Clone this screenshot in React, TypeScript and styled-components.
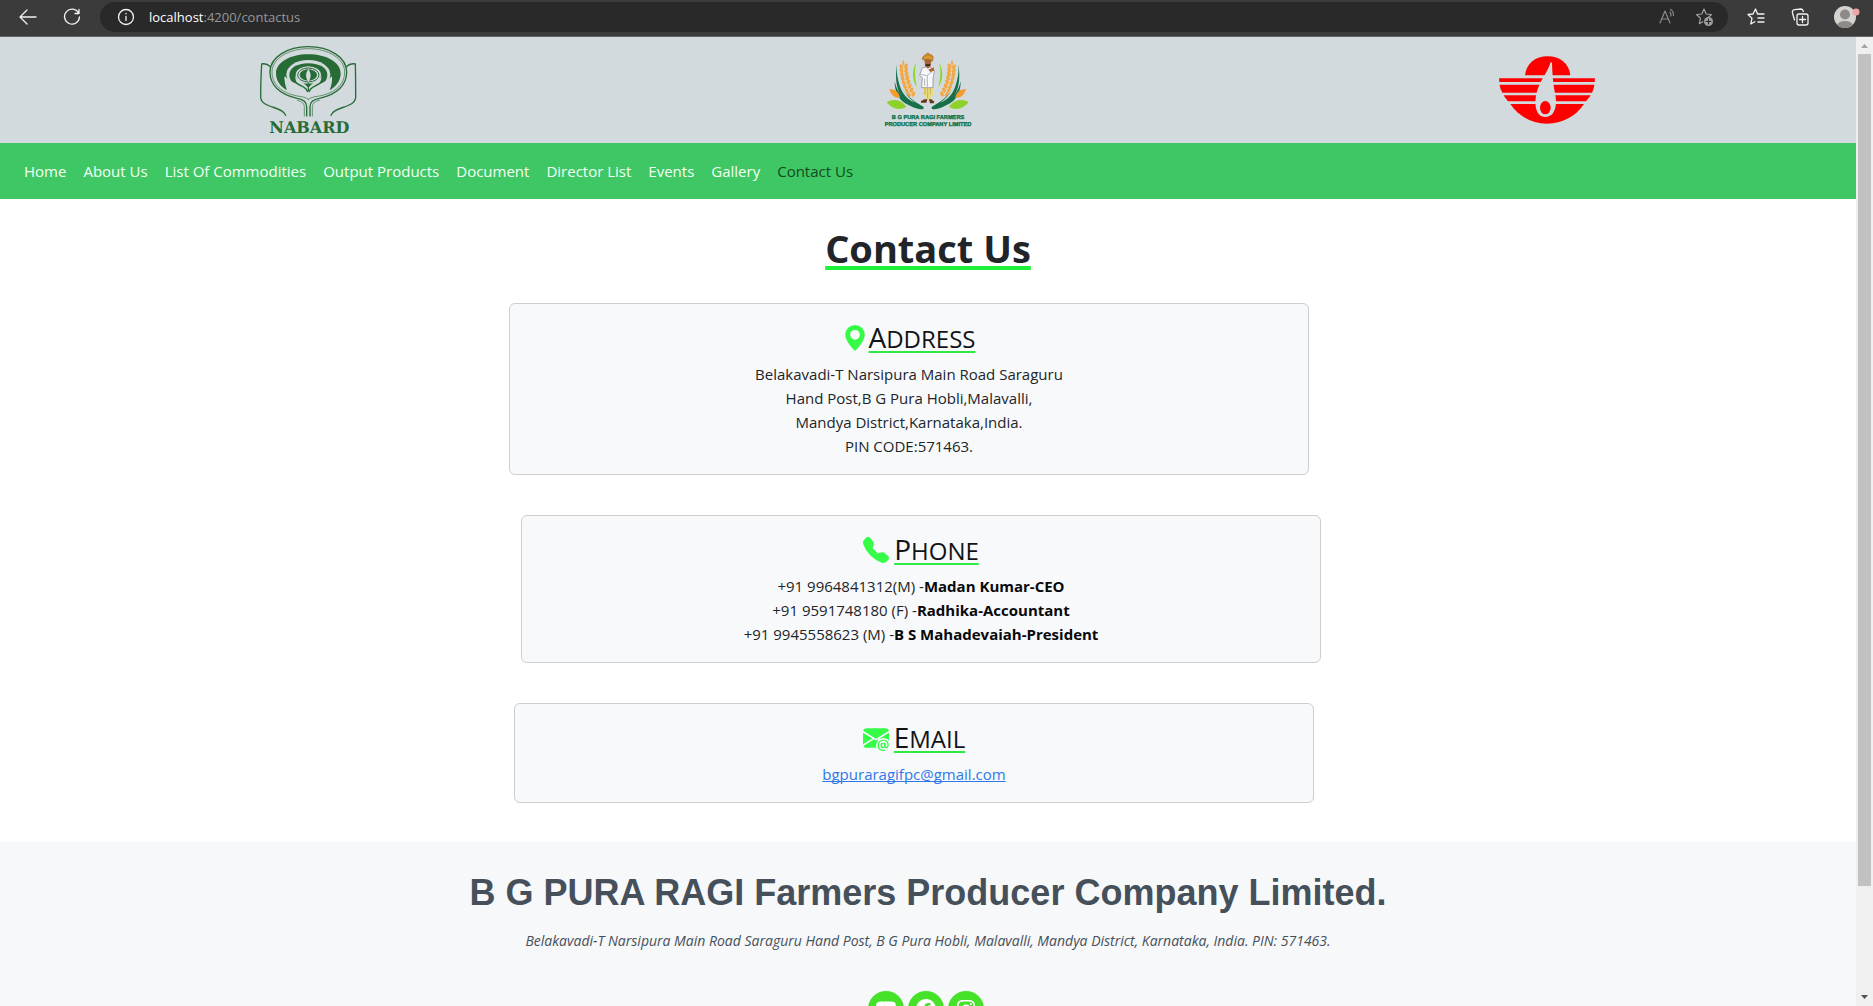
import React from "react";
import styled, { createGlobalStyle } from "styled-components";
import { BsEnvelopeAtFill, BsGeoAltFill, BsInstagram, BsTelephoneFill, BsYoutube, BsFacebook } from "react-icons/bs";

const GlobalStyle = createGlobalStyle`
  *, *::before, *::after { box-sizing: border-box; }
  body {
    margin: 0;
    overflow: hidden;
    background: #fff;
    color: #212529;
    font-family: "Open Sans", "Noto Sans", sans-serif;
    font-size: 15px;
    line-height: 24px;
  }
`;

const Window = styled.div`
  display: flex;
  flex-direction: column;
  height: 100vh;
`;

/* ---------- browser bar ---------- */

const BrowserBar = styled.div`
  flex: none;
  display: flex;
  align-items: center;
  height: 37px;
  padding: 0 13px 2px 16px;
  background: #3b3b3b;
  border-bottom: 1px solid #63676a;
`;

const IconButton = styled.button<{ $gap?: number; $color?: string }>`
  display: flex;
  flex: none;
  padding: 0;
  border: 0;
  background: none;
  color: ${(p) => p.$color ?? "#f2f2f2"};
  margin-left: ${(p) => p.$gap ?? 0}px;
`;

const AddressBar = styled.div`
  flex: 1;
  display: flex;
  align-items: center;
  height: 30px;
  margin-left: 16px;
  padding: 0 12px 0 14px;
  border-radius: 15px;
  background: #292929;
`;

const Url = styled.div`
  flex: 1;
  margin-left: 11px;
  color: #989898;
  font-size: 13px;
  line-height: 20px;

  span { color: #fff; }
`;

/* ---------- viewport and scrollbar ---------- */

const Viewport = styled.div`
  flex: 1;
  display: flex;
  min-height: 0;
`;

const Page = styled.div`
  flex: 1;
  min-width: 0;
  overflow: hidden;
`;

const Scrollbar = styled.div`
  flex: none;
  display: flex;
  flex-direction: column;
  align-items: center;
  width: 17px;
  background: #f0f0f0;
`;

const ScrollArrow = styled.svg`
  flex: none;
  width: 17px;
  height: 17px;
`;

const ScrollTrack = styled.div`
  flex: 1;
  width: 13px;
`;

const ScrollThumb = styled.div`
  height: 89%;
  background: #c1c1c1;
`;

/* ---------- site header ---------- */

const Header = styled.header`
  display: grid;
  grid-template-columns: repeat(3, 1fr);
  justify-items: center;
  background: #d3dadd;
`;

const Logo = styled.svg`
  display: block;
  width: 140px;
  height: 106px;
`;

const Nav = styled.nav`
  display: flex;
  align-items: center;
  gap: 17px;
  height: 56px;
  padding: 0 24px;
  background: #3ec764;
`;

const NavLink = styled.a<{ $active?: boolean }>`
  color: ${(p) => (p.$active ? "#144a22" : "#f4fff6")};
  text-decoration: none;
`;

/* ---------- contact cards ---------- */

const Main = styled.main`
  padding: 25px 0 39px;
`;

const Title = styled.h1`
  margin: 0 0 31px;
  font-size: 38px;
  line-height: 48px;
  font-weight: 700;
  text-align: center;
  text-decoration: underline 4px #1ff03c;
  text-underline-offset: 3px;
  text-decoration-skip-ink: none;
`;

const CardRow = styled.div<{ $inset: number }>`
  display: flex;
  justify-content: center;
  padding-right: ${(p) => p.$inset}px;

  & + & { margin-top: 40px; }
`;

const Card = styled.section`
  width: 800px;
  max-width: 100%;
  padding: 16px;
  border: 1px solid #ccced0;
  border-radius: 6px;
  background: #f8f9fb;
  text-align: center;
`;

const CardHeading = styled.div<{ $gap: number }>`
  display: flex;
  justify-content: center;
  align-items: center;
  gap: ${(p) => p.$gap}px;
  height: 36px;
  margin-bottom: 6px;

  svg {
    flex: none;
    width: 26px;
    height: 26px;
    color: #35fc46;
  }
`;

const CardTitle = styled.h2`
  margin: 0;
  color: #111416;
  font-size: 24px;
  line-height: 34px;
  font-weight: 500;
  text-transform: uppercase;
  text-decoration: underline 2px #2ceb45;
  text-underline-offset: 3px;
  text-decoration-skip-ink: none;

  &::first-letter { font-size: 28px; line-height: 34px; }
`;

const Line = styled.div`
  strong { color: #08090a; font-weight: 700; }
`;

const MailLink = styled.a`
  color: #3078ea;
  text-decoration: underline;
  text-decoration-skip-ink: none;
`;

/* ---------- footer ---------- */

const Footer = styled.footer`
  display: flex;
  flex-direction: column;
  align-items: center;
  padding: 28px 0 40px;
  background: #f6f8fa;
  color: #46505a;
`;

const Company = styled.h2`
  margin: 0;
  font-family: "Liberation Sans", Arial, sans-serif;
  font-size: 36px;
  line-height: 46px;
  font-weight: 700;
`;

const Place = styled.address`
  margin-top: 13px;
  font-size: 14px;
  line-height: 24px;
`;

const Social = styled.div`
  display: flex;
  gap: 4px;
  margin-top: 38px;
  padding-right: 4px;
`;

const SocialLink = styled.a`
  display: flex;
  align-items: center;
  justify-content: center;
  width: 36px;
  height: 36px;
  border-radius: 50%;
  background: #46e22a;
  color: #fff;
`;

/* ---------- drawings ---------- */

function NabardLogo() {
  const g = "#276b36";
  const bg = "#d3dadd";
  return (
    <Logo viewBox="-3 3 420 318" role="img" aria-label="NABARD">
      <g fill="none" stroke={g} strokeWidth="4" strokeLinecap="round">
        <path d="M200 240 V212 C200 196 190 190 172 187 C118 176 90 146 90 108 C90 64 141 32 205 32 C269 32 320 64 320 108 C320 146 292 176 238 187 C220 190 210 196 210 212 V240" />
        <path strokeWidth="2" d="M193 240 V212 C192 202 186 196 172 193 M217 240 V212 C218 202 224 196 238 193" />
        <path strokeWidth="2" d="M205 190 C198 184 186 182 172 180 C122 170 96 144 96 108 C96 68 145 38 205 38 C265 38 314 68 314 108 C314 144 288 170 238 180 C224 182 212 184 205 190" />
        <path d="M91 92 C85 86 75 82 65 84 C63 120 62 150 62 182 C62 218 130 210 137 238" />
        <path d="M319 92 C325 86 336 82 346 84 C347 120 347 150 347 182 C347 218 280 210 273 238" />
      </g>
      <path fill={g} d="M205 55 C150 55 108 79 108 112 C108 134 121 152 141 163 C135 147 133 134 134 121 L156 139 L254 139 L276 121 C277 134 275 147 269 163 C289 152 302 134 302 112 C302 79 260 55 205 55Z" />
      <ellipse cx="205" cy="115" rx="66" ry="43" fill={bg} />
      <path fill={g} d="M205 82 C170 82 148 97 148 116 C148 133 160 145 178 152 L232 152 C250 145 262 133 262 116 C262 97 240 82 205 82Z" />
      <ellipse cx="205" cy="117" rx="38" ry="26" fill={bg} />
      <ellipse cx="205" cy="117" rx="32" ry="21" fill="none" stroke={g} strokeWidth="3" />
      <ellipse cx="205" cy="117" rx="26" ry="17" fill={g} />
      <path fill={bg} d="M205 100 C214 112 214 126 205 138 C196 126 196 112 205 100Z" />
      <g fill={bg}>
        <path d="M134 121 C141 137 190 143 202 177 C180 180 132 166 134 121Z" />
        <path d="M276 121 C269 137 220 143 208 177 C230 180 278 166 276 121Z" />
        <path d="M166 119 C172 137 198 138 204 158 C180 157 164 140 166 119Z" />
        <path d="M244 119 C238 137 212 138 206 158 C230 157 246 140 244 119Z" />
      </g>
      <g fill="none" stroke={g} strokeWidth="4">
        <path d="M165 137 C180 152 199 151 203 168" />
        <path d="M245 137 C230 152 211 151 207 168" />
        <path d="M205 140 V166" />
      </g>
      <text x="208" y="290" textAnchor="middle" fill={g} fontFamily="'DejaVu Serif', serif" fontWeight="700" fontSize="48" textRendering="geometricPrecision">
        NABARD
      </text>
    </Logo>
  );
}

const GRAINS = [0, 1, 2, 3, 4, 5, 6, 7];

function WheatSide() {
  return (
    <g>
      <path d="M130 82 C134 120 140 152 162 186" fill="none" stroke="#f5c26b" strokeWidth="2" />
      {GRAINS.map((i) => {
        const x = 130 + i * i * 0.45;
        const y = 92 + i * 12;
        return (
          <g key={i} fill="#f3a742">
            <ellipse cx={x - 6} cy={y} rx="5" ry="8" transform={`rotate(-32 ${x - 6} ${y})`} />
            <ellipse cx={x + 8} cy={y - 2} rx="5" ry="8" transform={`rotate(24 ${x + 8} ${y - 2})`} />
          </g>
        );
      })}
      <ellipse cx="130" cy="81" rx="3" ry="8" fill="#f3a742" />
      <path d="M111 84 C107 135 122 175 190 212 C195 220 184 222 168 217 C120 200 100 150 111 84Z" fill="#17704a" />
      <path d="M104 136 C112 174 135 197 170 214 C130 208 104 184 104 136Z" fill="#17704a" />
      <path d="M114 110 C120 152 138 182 166 200 C134 188 114 158 114 110Z" fill="#d3dadd" />
      <path d="M88 160 C104 158 117 168 120 185 C104 187 94 178 88 160Z" fill="#f59a2c" />
      <path d="M80 199 C100 186 125 192 139 213 C118 224 98 220 80 199Z" fill="#8ed128" />
      <path d="M168 80 C154 108 158 136 171 153 C164 128 163 104 168 80Z" fill="#86d72d" />
    </g>
  );
}

function FarmersLogo() {
  return (
    <Logo viewBox="-6 3 420 318" role="img" aria-label="B G Pura Ragi Farmers Producer Company Limited">
      <WheatSide />
      <g transform="translate(406 0) scale(-1 1)">
        <WheatSide />
      </g>
      <path d="M189 150 L217 150 L222 178 L213 180 L210 194 L199 194 L198 180 L189 178Z" fill="#e9dc7d" />
      <path d="M195 156 V176 M203 154 V188 M211 156 V174" stroke="#b59f42" strokeWidth="2" />
      <path d="M186 97 L198 92 L213 94 L223 106 L219 126 L219 155 L185 155 L187 125 L179 118 Z" fill="#f7f8fb" stroke="#7d8188" strokeWidth="2" />
      <path d="M182 115 L200 119 L216 108 M202 120 V153 M194 128 V149" fill="none" stroke="#8c9098" strokeWidth="2" />
      <path d="M193 72 H214 L212 90 L204 98 L196 92Z" fill="#a96637" />
      <path d="M205 101 L221 94 L223 104 L211 108Z" fill="#a96637" />
      <path d="M195 85 H212 L209 90 H198Z" fill="#37231b" />
      <path d="M188 71 C186 58 198 58 200 53 C205 50 207 52 208 56 C220 56 221 64 217 75 L204 71Z" fill="#d18a27" stroke="#8d561c" strokeWidth="2" />
      <path d="M191 69 C199 61 208 61 217 68" fill="none" stroke="#f1c05a" strokeWidth="2" />
      <path d="M194 190 L202 190 L199 200 H183 L183 195Z M207 190 H214 L223 197 L221 202 H210Z" fill="#673323" />
      <g fill="#0d7449" stroke="#0d7449" strokeWidth="1" fontFamily="'Liberation Sans', Arial, sans-serif" fontWeight="700" textAnchor="middle" textRendering="geometricPrecision">
        <text x="204" y="248" fontSize="17">B G PURA RAGI FARMERS</text>
        <text x="204" y="271" fontSize="17">PRODUCER COMPANY LIMITED</text>
      </g>
    </Logo>
  );
}

function DropLogo() {
  const bg = "#d3dadd";
  return (
    <Logo viewBox="-9 -9 420 318" role="img" aria-label="Red emblem">
      <g fill="#fe0000">
        <path d="M135 106 C139 70 166 49 203 49 C240 49 267 70 271 106Z" />
        <path d="M57 115 H345 L344 126 H58Z" />
        <path d="M59 134 H343 C342 143 339 151 336 158 H67 C63 150 60 143 59 134Z" />
        <path d="M71 166 H332 C328 173 323 178 318 184 H84 C79 178 75 173 71 166Z" />
        <path d="M91 192 H312 C288 228 248 251 201 251 C155 251 116 229 91 192Z" />
      </g>
      <path d="M212 66 C204 95 184 116 174 145 C160 184 164 231 196 231 C228 231 232 190 225 160 C219 132 217 101 216 68Z" fill={bg} />
      <ellipse cx="196" cy="203" rx="16" ry="20" fill="#fe0000" />
    </Logo>
  );
}

const stroke = { fill: "none", stroke: "currentColor", strokeLinecap: "round", strokeLinejoin: "round" } as const;

const BackIcon = () => (
  <svg width="24" height="24" viewBox="0 0 24 24" {...stroke} strokeWidth="1.3">
    <path d="M20 12H4.500M11 5L4 12l7 7" />
  </svg>
);

const ReloadIcon = () => (
  <svg width="24" height="24" viewBox="0 0 24 24" {...stroke} strokeWidth="1.3">
    <path d="M18.600 8A7.500 7.500 0 1 0 19.500 12M19 4.500V8.500H15" />
  </svg>
);

const InfoIcon = () => (
  <svg width="24" height="24" viewBox="0 0 24 24" {...stroke} strokeWidth="1.3">
    <circle cx="12" cy="12" r="7.5" />
    <path d="M12 11.500v4M12 8.500v.3" />
  </svg>
);

const ReadAloudIcon = () => (
  <svg width="24" height="24" viewBox="0 0 24 24" {...stroke} strokeWidth="1.2">
    <path d="M4 18L9 6l5 12M6 14h6M14 7c1 1 1 2 1 4M14.500 4.500c2 1 3 3 3 6" />
  </svg>
);

const starPath = "M12 4l2.200 5 5.300.5-4 3.700M12 4L9.800 9l-5.300.5 4 3.700-1.200 5.500 3.500-2";

const StarPlusIcon = () => (
  <svg width="24" height="24" viewBox="0 0 24 24" {...stroke} strokeWidth="1.2">
    <path d={starPath} />
    <circle cx="16.5" cy="16.5" r="4.5" fill="currentColor" stroke="none" />
    <path d="M16.500 14v5M14 16.500h5" stroke="#292929" />
  </svg>
);

const FavoritesIcon = () => (
  <svg width="24" height="24" viewBox="0 0 24 24" {...stroke} strokeWidth="1.3">
    <path d="M13.500 9L11.500 4 9 9l-5 .5 4 3.700L6.800 19l4-2.300M14 9h6M14 13h6M14 17h6" />
  </svg>
);

const CollectionsIcon = () => (
  <svg width="24" height="24" viewBox="0 0 24 24" {...stroke} strokeWidth="1.3">
    <rect x="9" y="9" width="11" height="11" rx="2" />
    <path d="M14.500 11.500v6M11.500 14.500h6M6.500 15L4.500 8C4 6 5 5 6.500 4.700L13 4c2 0 2 1 2.300 2.500" />
  </svg>
);

const AvatarIcon = () => (
  <svg width="28" height="28" viewBox="0 0 28 28">
    <defs>
      <clipPath id="avatar"><circle cx="13" cy="14" r="11" /></clipPath>
    </defs>
    <circle cx="13" cy="14" r="11" fill="#d4d1ce" />
    <g clipPath="url(#avatar)" fill="#8d8a87">
      <circle cx="13" cy="11.5" r="5" />
      <ellipse cx="13" cy="23" rx="8" ry="5" />
    </g>
    <circle cx="24" cy="9" r="3.5" fill="#f0a3a3" />
  </svg>
);

/* ---------- data ---------- */

const NAV = ["Home", "About Us", "List Of Commodities", "Output Products", "Document", "Director List", "Events", "Gallery", "Contact Us"];

const ADDRESS = [
  "Belakavadi-T Narsipura Main Road Saraguru",
  "Hand Post,B G Pura Hobli,Malavalli,",
  "Mandya District,Karnataka,India.",
  "PIN CODE:571463.",
];

const PHONES = [
  { number: "+91 9964841312(M) -", name: "Madan Kumar-CEO" },
  { number: "+91 9591748180 (F) -", name: "Radhika-Accountant" },
  { number: "+91 9945558623 (M) -", name: "B S Mahadevaiah-President" },
];

export default function App() {
  return (
    <Window>
      <GlobalStyle />
      <BrowserBar>
        <IconButton aria-label="Back"><BackIcon /></IconButton>
        <IconButton aria-label="Reload" $gap={20}><ReloadIcon /></IconButton>
        <AddressBar>
          <IconButton aria-label="Site information"><InfoIcon /></IconButton>
          <Url><span>localhost</span>:4200/contactus</Url>
          <IconButton aria-label="Read aloud" $color="#8a8a8a"><ReadAloudIcon /></IconButton>
          <IconButton aria-label="Add to favorites" $color="#a0a0a0" $gap={12}><StarPlusIcon /></IconButton>
        </AddressBar>
        <IconButton aria-label="Favorites" $gap={16}><FavoritesIcon /></IconButton>
        <IconButton aria-label="Collections" $gap={20}><CollectionsIcon /></IconButton>
        <IconButton aria-label="Profile" $gap={20}><AvatarIcon /></IconButton>
      </BrowserBar>

      <Viewport>
        <Page>
          <Header>
            <NabardLogo />
            <FarmersLogo />
            <DropLogo />
          </Header>
          <Nav>
            {NAV.map((item) => (
              <NavLink key={item} href="#" $active={item === "Contact Us"}>{item}</NavLink>
            ))}
          </Nav>

          <Main>
            <Title>Contact Us</Title>
            <CardRow $inset={38}>
              <Card>
                <CardHeading $gap={0}>
                  <BsGeoAltFill />
                  <CardTitle>Address</CardTitle>
                </CardHeading>
                {ADDRESS.map((line) => <Line key={line}>{line}</Line>)}
              </Card>
            </CardRow>
            <CardRow $inset={14}>
              <Card>
                <CardHeading $gap={5}>
                  <BsTelephoneFill />
                  <CardTitle>Phone</CardTitle>
                </CardHeading>
                {PHONES.map((p) => (
                  <Line key={p.name}>{p.number}<strong>{p.name}</strong></Line>
                ))}
              </Card>
            </CardRow>
            <CardRow $inset={28}>
              <Card>
                <CardHeading $gap={5}>
                  <BsEnvelopeAtFill />
                  <CardTitle>Email</CardTitle>
                </CardHeading>
                <Line><MailLink href="mailto:bgpuraragifpc@gmail.com">bgpuraragifpc@gmail.com</MailLink></Line>
              </Card>
            </CardRow>
          </Main>

          <Footer>
            <Company>B G PURA RAGI Farmers Producer Company Limited.</Company>
            <Place>
              Belakavadi-T Narsipura Main Road Saraguru Hand Post, B G Pura Hobli, Malavalli, Mandya District, Karnataka, India. PIN: 571463.
            </Place>
            <Social>
              <SocialLink href="#" aria-label="YouTube"><BsYoutube size={20} /></SocialLink>
              <SocialLink href="#" aria-label="Facebook"><BsFacebook size={20} /></SocialLink>
              <SocialLink href="#" aria-label="Instagram"><BsInstagram size={18} /></SocialLink>
            </Social>
          </Footer>
        </Page>

        <Scrollbar aria-hidden="true">
          <ScrollArrow viewBox="0 0 17 17"><path d="M5 11L8.500 7L12 11Z" fill="#a3a3a3" /></ScrollArrow>
          <ScrollTrack><ScrollThumb /></ScrollTrack>
          <ScrollArrow viewBox="0 0 17 17"><path d="M5 6L8.500 10L12 6Z" fill="#505050" /></ScrollArrow>
        </Scrollbar>
      </Viewport>
    </Window>
  );
}
